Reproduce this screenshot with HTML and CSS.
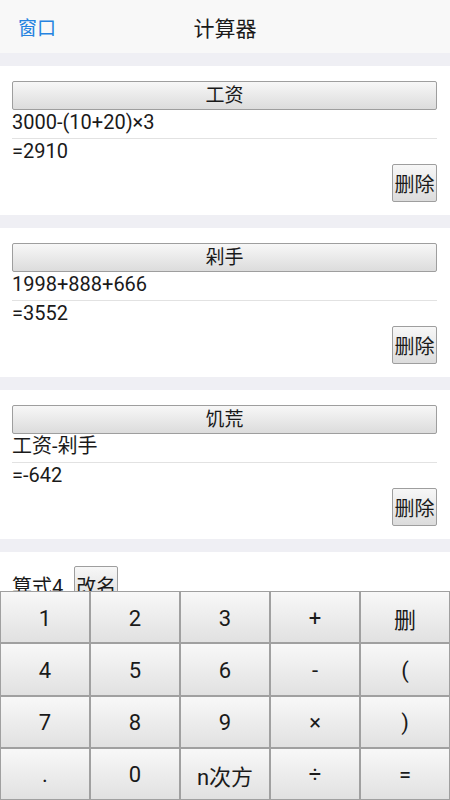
FILE: index.html
```html
<!DOCTYPE html>
<html lang="zh">
<head>
    <meta charset="UTF-8">
    <meta name="viewport" content="width=device-width, initial-scale=1.0">
    <title>计算器</title>
    <link rel="stylesheet" href="styles.css">
</head>
<body>
    <div class="header">
        <span class="back">窗口</span>
        <span class="title">计算器</span>
    </div>

    <div class="list">
        <div class="card">
            <button class="name-btn">工资</button>
            <div class="expr">3000-(10+20)×3</div>
            <div class="result">=2910</div>
            <div class="actions"><button class="del-btn">删除</button></div>
        </div>
        <div class="card">
            <button class="name-btn">剁手</button>
            <div class="expr">1998+888+666</div>
            <div class="result">=3552</div>
            <div class="actions"><button class="del-btn">删除</button></div>
        </div>
        <div class="card">
            <button class="name-btn">饥荒</button>
            <div class="expr">工资-剁手</div>
            <div class="result">=-642</div>
            <div class="actions"><button class="del-btn">删除</button></div>
        </div>
        <div class="card current">
            <div class="current-row">
                <span class="current-name">算式4</span>
                <button class="rename-btn">改名</button>
            </div>
        </div>
    </div>

    <!-- keypad stays at the bottom over the list -->
    <div class="keypad">
        <button class="key">1</button>
        <button class="key">2</button>
        <button class="key">3</button>
        <button class="key">+</button>
        <button class="key">删</button>
        <button class="key">4</button>
        <button class="key">5</button>
        <button class="key">6</button>
        <button class="key">-</button>
        <button class="key">(</button>
        <button class="key">7</button>
        <button class="key">8</button>
        <button class="key">9</button>
        <button class="key">×</button>
        <button class="key">)</button>
        <button class="key">.</button>
        <button class="key">0</button>
        <button class="key">n次方</button>
        <button class="key">÷</button>
        <button class="key">=</button>
    </div>
</body>
</html>
```

FILE: styles.css
```css
body {
    margin: 0;
    font-family: Roboto, "Noto Sans CJK SC", sans-serif;
    color: #1a1a1a;
    background-color: #efeff4;
    height: 800px;
    overflow: hidden;
}
button {
    font-family: Roboto, "Noto Sans CJK SC", sans-serif;
    color: #1a1a1a;
    background: linear-gradient(#f7f7f7, #dcdcdc);
    border: 1px solid #9e9e9e;
    border-radius: 2px;
    padding: 0;
    margin: 0;
}
.header {
    height: 53px;
    background-color: #f8f8f8;
    display: flex;
    align-items: center;
    position: relative;
}
.back {
    margin-left: 18px;
    font-size: 19px;
    color: #2683e0;
}
.title {
    position: absolute;
    left: 0;
    right: 0;
    text-align: center;
    font-size: 21px;
    pointer-events: none;
}
.list {
    padding-top: 13px;
}
.card {
    background-color: #ffffff;
    padding: 15px 13px 13px 12px;
    margin-bottom: 13px;
}
.name-btn {
    display: block;
    width: 100%;
    height: 29px;
    font-size: 19px;
    line-height: 27px;
}
.expr {
    font-size: 20px;
    line-height: 24px;
    padding-bottom: 4px;
    border-bottom: 1px solid #e2e2e2;
}
.result {
    font-size: 20px;
    line-height: 25px;
}
.actions {
    display: flex;
    justify-content: flex-end;
}
.del-btn {
    width: 45px;
    height: 38px;
    font-size: 20px;
}
.current {
    padding-top: 14px;
}
.current-row {
    display: flex;
    align-items: center;
}
.current-name {
    font-size: 20px;
    margin-right: 11px;
}
.rename-btn {
    width: 44px;
    height: 38px;
    font-size: 20px;
}
.keypad {
    position: fixed;
    left: 0;
    right: 0;
    bottom: 0;
    height: 209px;
    display: grid;
    grid-template-columns: repeat(5, 1fr);
    grid-template-rows: repeat(4, 1fr);
    background-color: #ffffff;
}
.key {
    font-size: 22px;
    padding-top: 2px;
    border-radius: 0;
    border: 1px solid #a0a0a0;
    background: linear-gradient(#f8f8f8, #e1e1e1);
}
```
